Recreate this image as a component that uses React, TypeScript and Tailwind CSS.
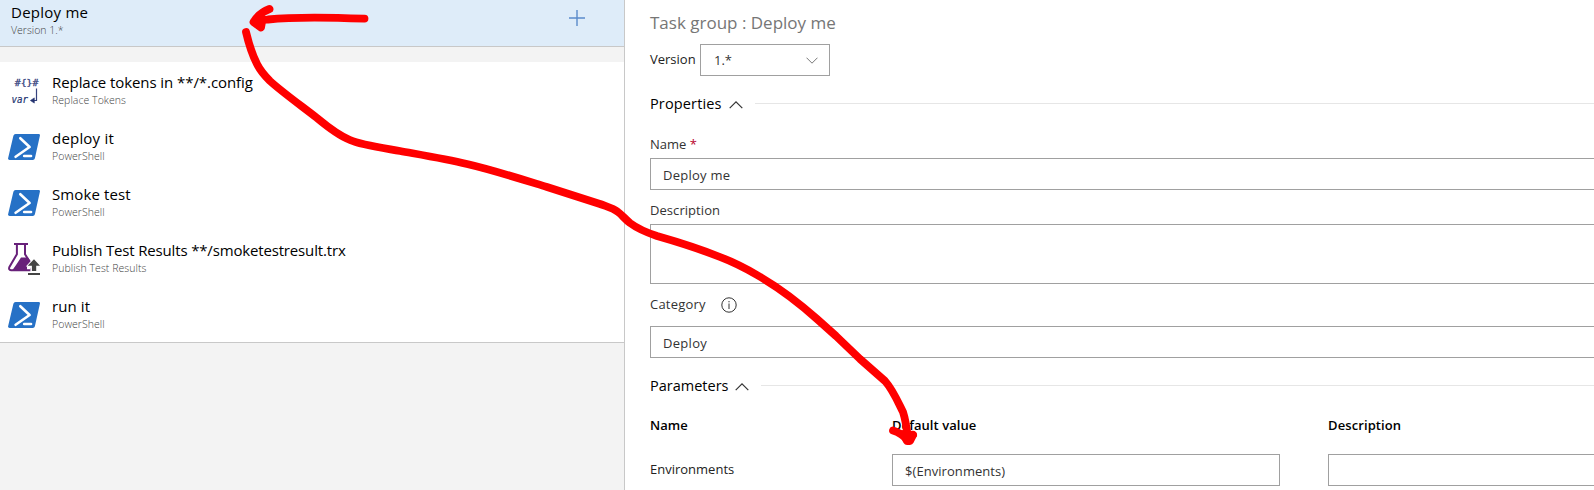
import type { ReactNode } from "react";

function PowerShellIcon() {
  return (
    <svg width="32" height="26" viewBox="0 0 32 26" fill="none">
      <path d="M7.6 0H30.6Q32.3 0 31.9 1.7L26.9 24.3Q26.5 26 24.8 26H1.6Q-0.3 26 0.1 24.3L5.4 1.7Q5.8 0 7.6 0Z" fill="#2671c6" />
      <path d="M12.3 4.2L21.6 13L7.6 22.8" stroke="#fff" strokeWidth="2.6" strokeLinecap="round" strokeLinejoin="round" />
      <path d="M16.2 22H23" stroke="#fff" strokeWidth="2.6" strokeLinecap="round" />
    </svg>
  );
}

function TokensIcon() {
  return (
    <svg width="32" height="32" viewBox="0 0 32 32" fill="none">
      <text x="6.8" y="11" fontSize="9.4" fontFamily="'DejaVu Sans Mono', monospace" fill="#36437e" stroke="#36437e" strokeWidth="0.3" textLength="23.6" lengthAdjust="spacingAndGlyphs">{"#{}#"}</text>
      <text x="3.6" y="28.3" fontSize="9.6" fontStyle="italic" fontFamily="'DejaVu Sans Mono', monospace" fill="#22316f" stroke="#22316f" strokeWidth="0.2" textLength="16.5" lengthAdjust="spacingAndGlyphs">var</text>
      <path d="M28.5 13.5V25.5H24" stroke="#36437e" strokeWidth="1.2" />
      <path d="M22.4 25.5L26.3 22.9V28.1Z" fill="#22316f" stroke="#22316f" strokeWidth="0.6" />
    </svg>
  );
}

function FlaskIcon() {
  return (
    <svg width="32" height="32" viewBox="0 0 32 32" fill="none">
      <path d="M6 1H20" stroke="#68217a" strokeWidth="2" />
      <path d="M8.9 1V11.2L1.3 24.2Q0.4 27 3 27.2H22.6L24.6 23.5L17 11.2V1" stroke="#68217a" strokeWidth="2" />
      <path d="M13 14.5H20L24 20L19 23.5V28H3.8L8.2 21.8Z" fill="#68217a" />
      <path d="M10.4 13.6L4.8 24.4" stroke="#fff" strokeWidth="2" />
      <path d="M26 14.6L17.8 23.4H22.4V29.5H30.4V23.4H34Z" fill="#fff" />
      <path d="M26 16.2L19.6 22.8H23.9V28H28.2V22.8H32Z" fill="#444" />
      <path d="M20 31H32" stroke="#444" strokeWidth="2" />
    </svg>
  );
}

function Chevron({ up = false }: { up?: boolean }) {
  return up ? (
    <svg width="14" height="8" viewBox="0 0 14 8" fill="none">
      <path d="M0.7 7.2L7 0.9L13.3 7.2" stroke="#333" strokeWidth="1.2" />
    </svg>
  ) : (
    <svg width="12" height="7" viewBox="0 0 12 7" fill="none">
      <path d="M0.5 0.7L6 6.2L11.5 0.7" stroke="#777" strokeWidth="1" />
    </svg>
  );
}

function Task({ icon, title, titleClass, subtitle }: {
  icon: ReactNode; title: string; titleClass: string; subtitle: string;
}) {
  return (
    <li className="flex h-14 pl-2">
      <div className="flex w-8 items-center pt-1 pb-[2px]">{icon}</div>
      <div className="pt-[9px] pl-3 whitespace-nowrap">
        <div className={`text-[15px] leading-[22px] text-black ${titleClass}`}>{title}</div>
        <div className="text-[10.5px] leading-[14px] font-light tracking-[0.05px] text-[#444]">{subtitle}</div>
      </div>
    </li>
  );
}

function Section({ title, className }: { title: string; className: string }) {
  return (
    <div className="flex h-5 items-center">
      <h2 className={`pt-[2px] text-[14.5px] leading-5 text-black ${className}`}>{title}</h2>
      <div className="pt-[3px] pr-[12px] pl-[7px]"><Chevron up /></div>
      <div className="h-px flex-1 bg-[#e6e6e6]" />
    </div>
  );
}

const field = "flex h-8 items-center border border-[#a0a0a0] pl-3 pt-[3px] text-[13px] text-[#333]";

function Annotations() {
  return (
    <svg className="pointer-events-none absolute top-0 left-0" width="1594" height="490" viewBox="0 0 1594 490" fill="none" stroke="#f00" strokeWidth="7.8" strokeLinecap="round" strokeLinejoin="round">
      <path d="M364.500 18.700Q300 16 268 19.500L254 21.500M269.500 9Q259 13 253.500 22L261 27.500L262 22" />
      <path d="M246 32C249 45 252 54 257 64C260 70 264 75 270 81C282 92 303 107 317 118C329 128 340 136 350 140C361 145 383 148 400 151C422 155 446 159 467 164C493 170 521 179 547 187L600 204C608 207 613 208 618 212C622 215 625 219 630 223C638 229 648 233 657 236C678 242 700 249 720 257C733 262 745 268 757 275C778 287 798 302 817 319L836 336L860 359L885 381C893 390 898 402 903 412C906 421 907 430 908 439" />
      <path d="M893 430.500Q901 433 908 440L913 435" />
      <path d="M903 434L913 435L910 441L907 441Z" fill="#f00" />
    </svg>
  );
}

export default function App() {
  return (
    <div className="relative flex h-[490px] w-full overflow-hidden bg-white font-['Open_Sans',sans-serif]">
      <aside className="flex w-[625px] shrink-0 flex-col border-r border-[#c8c8c8] bg-[#f3f3f3]">
        <header className="flex h-[47px] shrink-0 justify-between border-b border-[#c8c8c8] bg-[#deecf9] pl-[11px]">
          <div className="pt-[1px] whitespace-nowrap">
            <div className="text-[15px] leading-[23px] tracking-[0.25px] text-black">Deploy me</div>
            <div className="text-[10.5px] leading-[13px] font-light text-[#444]">Version 1.*</div>
          </div>
          <svg className="mt-[10px] mr-[39px]" width="16" height="16" viewBox="0 0 16 16" fill="none" stroke="#5b8bcb" strokeWidth="1.4">
            <path d="M8 0V16M0 8H16" />
          </svg>
        </header>
        <ul className="mt-[15px] shrink-0 border-b border-[#c8c8c8] bg-white">
          <Task icon={<TokensIcon />} title="Replace tokens in **/*.config" titleClass="tracking-[-0.07px]" subtitle="Replace Tokens" />
          <Task icon={<PowerShellIcon />} title="deploy it" titleClass="tracking-[0.2px]" subtitle="PowerShell" />
          <Task icon={<PowerShellIcon />} title="Smoke test" titleClass="tracking-[0.1px]" subtitle="PowerShell" />
          <Task icon={<FlaskIcon />} title="Publish Test Results **/smoketestresult.trx" titleClass="tracking-[-0.16px]" subtitle="Publish Test Results" />
          <Task icon={<PowerShellIcon />} title="run it" titleClass="tracking-[0.1px]" subtitle="PowerShell" />
        </ul>
      </aside>
      <main className="flex min-w-0 flex-1 flex-col pl-[25px] whitespace-nowrap">
        <h1 className="mt-[11px] text-[17px] leading-6 text-[#767676]">Task group : Deploy me</h1>
        <div className="mt-[9px] flex h-8">
          <span className="w-[50px] text-[13px] leading-[30px] text-[#222]">Version</span>
          <div className="flex h-8 w-[130px] items-center justify-between border border-[#a0a0a0] pr-[11px] pl-[13px] text-[13px] text-[#333]">
            <span className="pt-[2px]">1.*</span>
            <Chevron />
          </div>
        </div>
        <div className="mt-[17px]"><Section title="Properties" className="tracking-[0.14px]" /></div>
        <div className="mt-[21px] text-[13px] leading-5 text-[#333]">Name <span className="text-[#b8002c]">*</span></div>
        <div className={`mt-[4px] border-r-0 tracking-[0.25px] ${field}`}>Deploy me</div>
        <div className="mt-[10px] text-[13px] leading-5 tracking-[0.06px] text-[#333]">Description</div>
        <div className="mt-[4px] h-[60px] shrink-0 border border-r-0 border-[#a0a0a0]" />
        <div className="mt-[10px] flex h-5 items-center text-[13px] text-[#333]">
          <span className="w-[71px] pt-[2px] tracking-[0.2px]">Category</span>
          <svg className="mt-px" width="16" height="16" viewBox="0 0 16 16" fill="none" stroke="#333" strokeWidth="1">
            <circle cx="8" cy="8" r="7.2" />
            <path d="M8 6.500V12M8 4V5.300" />
          </svg>
        </div>
        <div className={`mt-[12px] border-r-0 tracking-[0.3px] ${field}`}>Deploy</div>
        <div className="mt-[17px]"><Section title="Parameters" className="" /></div>
        <div className="mt-[20px] grid grid-cols-[242px_436px_1fr] text-[13px] leading-5 font-semibold text-black">
          <span>Name</span>
          <span className="tracking-[0.06px]">Default value</span>
          <span className="tracking-[0.1px]">Description</span>
        </div>
        <div className="mt-[19px] grid grid-cols-[242px_436px_1fr]">
          <span className="text-[13px] leading-[30px] text-[#222]">Environments</span>
          <div className={`w-[388px] tracking-[0.06px] ${field}`}>$(Environments)</div>
          <div className={`border-r-0 ${field}`} />
        </div>
      </main>
      <Annotations />
    </div>
  );
}
